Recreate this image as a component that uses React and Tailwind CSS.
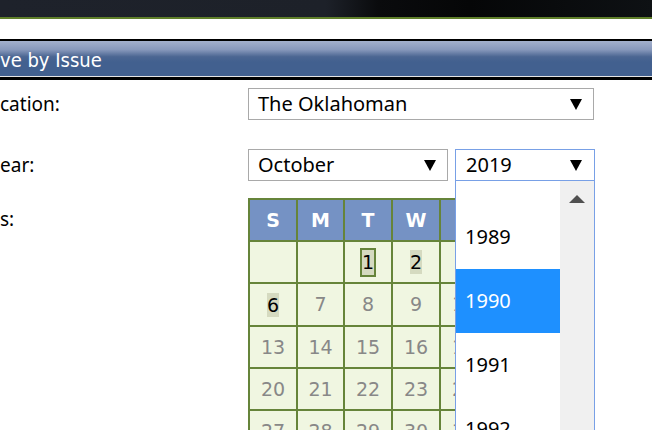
import React from "react";

const Arrow = () => (
  <svg width="12" height="11" viewBox="0 0 12 11" className="shrink-0">
    <polygon points="0,0 12,0 6,11" fill="#000" />
  </svg>
);

const weeks = [
  ["", "", "1", "2", "3", "4", "5"],
  ["6", "7", "8", "9", "10", "11", "12"],
  ["13", "14", "15", "16", "17", "18", "19"],
  ["20", "21", "22", "23", "24", "25", "26"],
  ["27", "28", "29", "30", "31", "", ""],
];

const rowH = ["h-[40px]", "h-[41px]", "h-[40px]", "h-[40px]", "h-[40px]"];

function DayCell({ d }) {
  if (d === "1") {
    return (
      <span className="inline-flex items-center justify-center border-2 border-[#66843a] bg-[#d5dac0] text-black w-[16px] h-[29px]">
        1
      </span>
    );
  }
  if (d === "2" || d === "6") {
    return <span className="bg-[#d5dac0] text-black px-[0px] leading-[24px]">{d}</span>;
  }
  return <span>{d}</span>;
}

export default function App() {
  const ui = { fontFamily: '"Noto Sans", "Open Sans", sans-serif' };
  const verdana = { fontFamily: '"DejaVu Sans", Verdana, sans-serif' };
  return (
    <div className="relative w-[652px] h-[430px] overflow-hidden bg-white">
      {/* top dark bar */}
      <div className="h-[17px] bg-[linear-gradient(to_right,#1e222b_0%,#1d2129_50%,#0a0b0d_58%,#050607_72%,#0e1114_100%)]" />
      <div className="h-[2px] bg-[#5f7f2a]" />
      <div className="h-[20px] bg-white" />
      <div className="h-[2px] bg-black" />
      {/* blue title bar */}
      <div className="h-[35px] flex items-center bg-[linear-gradient(to_bottom,#a3b0cc_0%,#8798bb_25%,#4b6692_45%,#42608f_60%,#42608f_100%)]">
        <span
          className="text-white text-[20px] leading-none mt-[2px]"
          style={{ fontFamily: '"DejaVu Sans Condensed", "DejaVu Sans", sans-serif', fontStretch: "condensed" }}
        >
          ve by Issue
        </span>
      </div>
      <div className="h-[1px] bg-[#e4e4e4]" />
      <div className="h-[3px] bg-black" />

      {/* form */}
      <div className="flex text-[19px] text-black" style={ui}>
        <div className="w-[248px] shrink-0 flex flex-col pt-[8px]">
          <div className="h-[32px] flex items-center">cation:</div>
          <div className="h-[32px] mt-[29px] flex items-center">ear:</div>
          <div className="h-[42px] mt-[17px] flex items-center">s:</div>
        </div>
        <div className="flex flex-col pt-[8px] text-[20px]">
          <div className="w-[346px] h-[32px] border border-[#a9a9a9] flex items-center justify-between pl-[9px] pr-[11px]">
            <span>The Oklahoman</span>
            <Arrow />
          </div>
          <div className="flex mt-[29px] gap-[7px]">
            <div className="w-[200px] h-[32px] border border-[#a9a9a9] flex items-center justify-between pl-[9px] pr-[11px]">
              <span>October</span>
              <Arrow />
            </div>
            <div className="w-[140px] h-[32px] border border-[#78a0e6] flex items-center justify-between pl-[10px] pr-[12px]">
              <span>2019</span>
              <Arrow />
            </div>
          </div>
          {/* calendar */}
          <div
            className="mt-[17px] w-max grid grid-cols-[46px_45px_46px_46px_46px_46px_46px] gap-[2px] p-[2px] bg-[#66843a] text-[19px]"
            style={verdana}
          >
            {["S", "M", "T", "W", "T", "F", "S"].map((h, i) => (
              <div key={"h" + i} className="h-[40px] bg-[#7592c4] text-white font-bold flex items-center justify-center">
                {h}
              </div>
            ))}
            {weeks.map((w, ri) =>
              w.map((d, ci) => (
                <div
                  key={ri + "-" + ci}
                  className={`${rowH[ri]} bg-[#f0f6e1] text-[#888888] flex items-center justify-center`}
                >
                  <DayCell d={d} />
                </div>
              ))
            )}
          </div>
        </div>
      </div>

      {/* open year dropdown */}
      <div className="absolute left-[455px] top-[181px] w-[140px] h-[260px] border-x border-[#78a0e6] bg-white overflow-hidden" style={ui}>
        <div className="absolute right-0 top-0 bottom-0 w-[34px] bg-[#f0f0f0] flex justify-center pt-[14px]">
          <svg width="16" height="8" viewBox="0 0 16 8">
            <polygon points="8,0 16,8 0,8" fill="#505050" />
          </svg>
        </div>
        <div className="w-[104px] -mt-[40px] text-[20px]">
          {["1988", "1989", "1990", "1991", "1992"].map((y) => (
            <div
              key={y}
              className={`h-[64px] flex items-center pl-[9px] ${y === "1990" ? "bg-[#1e90ff] text-white" : "text-black"}`}
            >
              {y}
            </div>
          ))}
        </div>
      </div>
    </div>
  );
}
